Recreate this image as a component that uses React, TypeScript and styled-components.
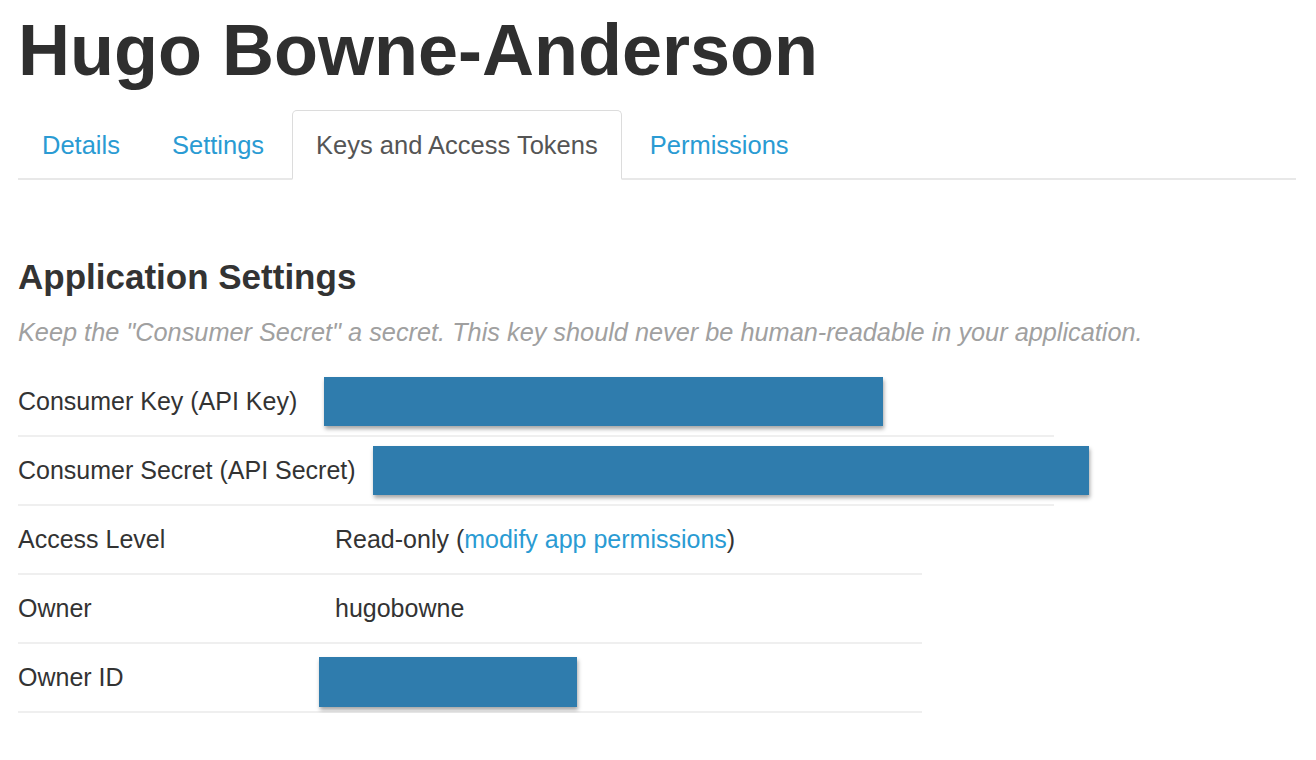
import React from 'react';
import styled, { createGlobalStyle } from 'styled-components';

const GlobalStyle = createGlobalStyle`
  html, body {
    margin: 0;
    padding: 0;
    background: #fff;
  }
  body {
    font-family: 'Liberation Sans', Arial, sans-serif;
    color: #333;
  }
`;

const Page = styled.div`
  padding: 0 20px 0 18px;
`;

const Title = styled.h1`
  margin: 14px 0 0;
  font-size: 72px;
  line-height: 72px;
  font-weight: 700;
  color: #2f2f2f;
`;

const TabList = styled.ul`
  display: flex;
  list-style: none;
  margin: 24px 0 0;
  padding: 0;
  border-bottom: 2px solid #e8e8e8;
`;

const Tab = styled.li<{ $active?: boolean }>`
  margin: 0 4px -2px 0;
  padding: 17px 23px 15px;
  font-size: 25.5px;
  line-height: 35px;
  border: 1px solid ${p => (p.$active ? '#dcdcdc' : 'transparent')};
  border-bottom: 2px solid ${p => (p.$active ? '#fff' : 'transparent')};
  border-radius: 5px 5px 0 0;
  color: ${p => (p.$active ? '#555' : '#2a9bd3')};
  background: ${p => (p.$active ? '#fff' : 'transparent')};
  cursor: pointer;
`;

const Heading = styled.h2`
  margin: 76px 0 0;
  font-size: 35px;
  line-height: 42px;
  font-weight: 700;
  color: #333;
`;

const Note = styled.p`
  margin: 17px 0 0;
  font-size: 25.3px;
  line-height: 35px;
  font-style: italic;
  color: #a0a0a0;
`;

const Table = styled.div<{ $width: number; $gap?: number }>`
  width: ${p => p.$width}px;
  margin-top: ${p => p.$gap ?? 0}px;
`;

const Row = styled.div`
  position: relative;
  display: flex;
  align-items: center;
  padding: 16px 0;
  font-size: 25px;
  line-height: 35px;
  border-bottom: 2px solid #efefef;
`;

const Label = styled.div`
  width: 317px;
  flex-shrink: 0;
  white-space: nowrap;
  color: #333;
`;

const Value = styled.div`
  color: #333;
`;

const Link = styled.a`
  color: #2a9bd3;
  text-decoration: none;
`;

const Redaction = styled.span<{ $left: number; $top: number; $width: number; $height: number }>`
  position: absolute;
  left: ${p => p.$left}px;
  top: ${p => p.$top}px;
  width: ${p => p.$width}px;
  height: ${p => p.$height}px;
  background: #2f7cad;
  box-shadow: 1px 3px 4px rgba(0, 0, 0, 0.35);
`;

const tabs = ['Details', 'Settings', 'Keys and Access Tokens', 'Permissions'];

export default () => {
  return (
    <Page>
      <GlobalStyle />
      <Title>Hugo Bowne-Anderson</Title>

      <TabList>
        {tabs.map(t => (
          <Tab key={t} $active={t === 'Keys and Access Tokens'}>
            {t}
          </Tab>
        ))}
      </TabList>

      <Heading>Application Settings</Heading>
      <Note>
        Keep the "Consumer Secret" a secret. This key should never be human-readable in your application.
      </Note>

      <Table $width={1036} $gap={18}>
        <Row>
          <Label>Consumer Key (API Key)</Label>
          <Value />
          <Redaction $left={306} $top={9} $width={559} $height={49} />
        </Row>
        <Row>
          <Label>Consumer Secret (API Secret)</Label>
          <Value />
          <Redaction $left={355} $top={9} $width={716} $height={49} />
        </Row>
      </Table>

      <Table $width={904}>
        <Row>
          <Label>Access Level</Label>
          <Value>
            Read-only (<Link href="#">modify app permissions</Link>)
          </Value>
        </Row>
        <Row>
          <Label>Owner</Label>
          <Value>hugobowne</Value>
        </Row>
        <Row>
          <Label>Owner ID</Label>
          <Value />
          <Redaction $left={301} $top={13} $width={258} $height={50} />
        </Row>
      </Table>
    </Page>
  );
};
